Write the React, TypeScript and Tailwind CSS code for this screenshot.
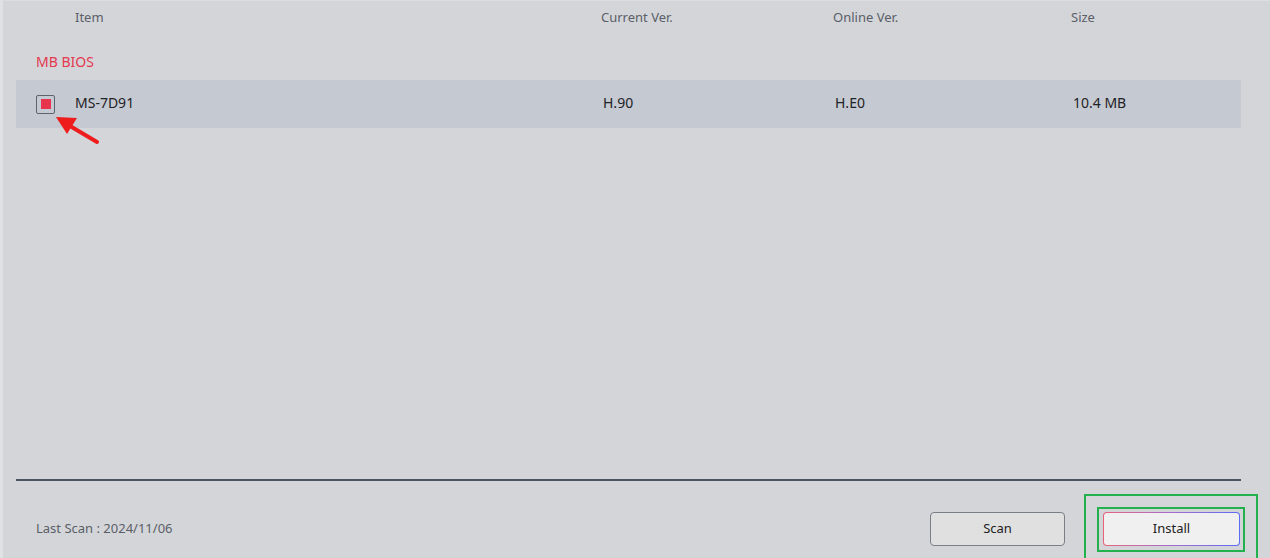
import React from "react";

export default function App() {
  const font = { fontFamily: '"Noto Sans", "Open Sans", sans-serif' };
  return (
    <div
      className="relative flex h-[558px] w-[1270px] overflow-hidden bg-[#d4d5d9]"
      style={font}
    >
      <div className="w-[3px] shrink-0 bg-[#e0e1e3]" />
      <div className="flex flex-1 flex-col border-t border-[#dcdde0] pl-[13px] pr-[29px]">
        {/* header */}
        <div className="grid h-[33px] grid-cols-[59px_526px_232px_238px_1fr] items-center text-[13px] text-[#5a5f68]">
          <div />
          <div>Item</div>
          <div>Current Ver.</div>
          <div>Online Ver.</div>
          <div>Size</div>
        </div>
        {/* section */}
        <div className="flex h-[46px] items-center pl-[20px] pt-[8px] text-[14px] text-[#e4384f]">
          MB BIOS
        </div>
        {/* row */}
        <div className="grid h-[48px] grid-cols-[59px_526px_232px_238px_1fr] items-center bg-[#c5c9d1] text-[14px] text-[#1f2227]">
          <div className="pl-[20px]">
            <div className="flex h-[19px] w-[19px] items-center justify-center rounded-[2px] border-[1.5px] border-[#5d6470]">
              <div className="h-[10px] w-[10px] bg-[#e8354d]" />
            </div>
          </div>
          <div className="pb-[3px]">MS-7D91</div>
          <div className="pb-[3px] pl-[2px]">H.90</div>
          <div className="pb-[3px] pl-[2px]">H.E0</div>
          <div className="pb-[3px] pl-[2px]">10.4 MB</div>
        </div>
        <div className="flex-1" />
        <div className="h-[2px] bg-[#4b5361]" />
        {/* footer */}
        <div className="flex h-[77px] items-start pr-[1px] pt-[31px]">
          <div className="flex h-[34px] flex-1 items-center pl-[20px] text-[13px] text-[#5a5f68]">
            Last Scan : 2024/11/06
          </div>
          <button className="h-[34px] w-[135px] rounded-[4px] border border-[#7a7e86] bg-[#e0e0e1] text-[13px] text-[#222]">
            Scan
          </button>
          <div className="ml-[38px] h-[34px] w-[137px] rounded-[4px] bg-gradient-to-r from-[#e8627a] via-[#a26ccc] to-[#5a6cf0] p-[1px]">
            <button className="h-full w-full rounded-[3px] bg-[#f0f0f0] text-[13px] text-[#222]">
              Install
            </button>
          </div>
        </div>
      </div>

      {/* annotations */}
      <div className="pointer-events-none absolute left-[1084px] top-[494px] h-[80px] w-[174px] border-2 border-[#22b14c]" />
      <div className="pointer-events-none absolute left-[1097px] top-[507px] h-[45px] w-[148px] border-2 border-[#22b14c]" />
      <svg
        className="pointer-events-none absolute left-0 top-0"
        width="1270"
        height="558"
      >
        <line x1="97" y1="142" x2="70" y2="126" stroke="#ee1c1c" strokeWidth="4" strokeLinecap="round" />
        <polygon points="56,117 77,118 67,134" fill="#ee1c1c" />
      </svg>
    </div>
  );
}
